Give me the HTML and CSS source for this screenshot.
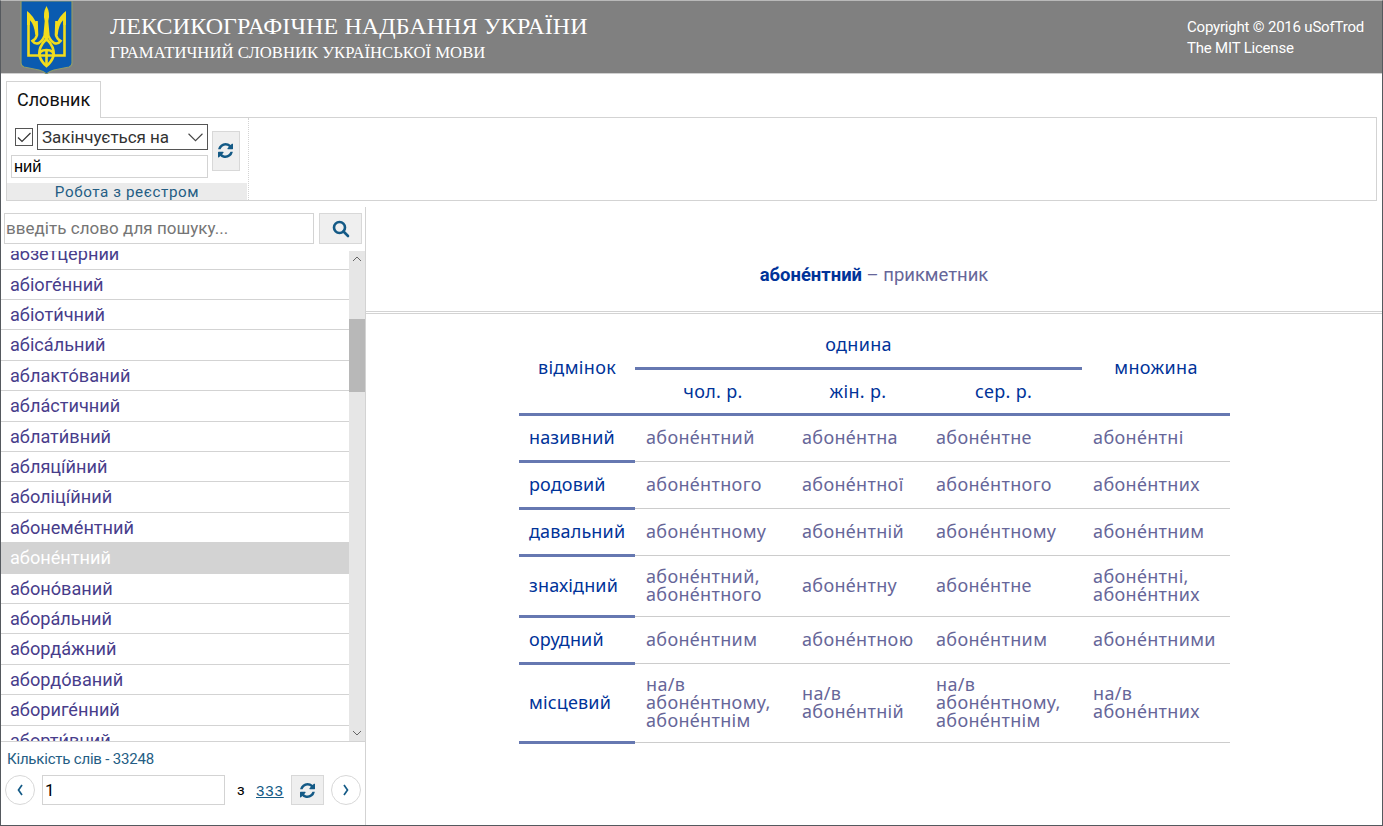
FILE: index.html
```html
<!DOCTYPE html>
<html lang="uk">
<head>
<meta charset="utf-8">
<title>Лексикографічне надбання України</title>
<link rel="stylesheet" href="styles.css">
</head>
<body>
<svg class="defs" width="0" height="0">
  <symbol id="refresh" viewBox="0 0 1536 1536">
    <path d="M1511 928q0 5-1 7-64 268-268 434.500T764 1536q-146 0-282.500-55T238 1324l-129 129q-19 19-45 19t-45-19-19-45V960q0-26 19-45t45-19h448q26 0 45 19t19 45-19 45l-137 137q71 66 161 102t187 36q134 0 250-65t186-179q11-17 53-117 8-23 30-23h192q13 0 22.500 9.500t9.500 22.500zM1536 128v448q0 26-19 45t-45 19h-448q-26 0-45-19t-19-45 19-45l138-138Q969 256 768 256q-134 0-250 65T332 500q-11 17-53 117-8 23-30 23H50q-13 0-22.500-9.500T18 608v-7q65-268 270-434.500T768 0q146 0 284 55.500T1297 212l130-129q19-19 45-19t45 19 19 45z"/>
  </symbol>
</svg>
<div class="app">
  <header class="header">
    <svg class="emblem" viewBox="0 0 54 73">
      <path d="M1 0H52V62Q52 65 49 66L34 69Q30 70 26.500 73Q23 70 19 69L4 66Q1 65 1 62Z" fill="#0a5bb0" stroke="#8f9b69" stroke-width="1.2"/>
      <g fill="none" stroke="#f2dc1c" stroke-width="2.6">
        <path d="M8.500 17V54.500H44.500V17"/>
        <path d="M16.500 20L17 34Q16 38 12.500 40Q15 43.500 19 42Q24 39 26 30"/>
        <path d="M36.500 20L36 34Q37 38 40.500 40Q38 43.500 34 42Q29 39 27 30"/>
        <path d="M26.500 38Q18 46 19.500 55Q21.500 61 26.500 65Q31.500 61 33.500 55Q35 46 26.500 38Z"/>
        <path d="M19 55Q19 49 26.500 49Q34 49 34 55M26.500 49V65"/>
      </g>
      <g fill="#f2dc1c">
        <path d="M7 10Q13 14 17.800 25V33L15.300 34Q14.500 24 9.800 19V24H7Z"/>
        <path d="M46 10Q40 14 35.200 25V33L37.700 34Q38.500 24 43.200 19V24H46Z"/>
        <path d="M26.500 5Q30.500 12 28.300 20L29.500 33L26.500 41L23.500 33L24.700 20Q22.500 12 26.500 5Z"/>
      </g>
    </svg>
    <div class="titles">
      <div class="title">ЛЕКСИКОГРАФІЧНЕ НАДБАННЯ УКРАЇНИ</div>
      <div class="subtitle">ГРАМАТИЧНИЙ СЛОВНИК УКРАЇНСЬКОЇ МОВИ</div>
    </div>
    <div class="copyright">Copyright © 2016 uSofTrod<br>The MIT License</div>
  </header>

  <section class="ribbon">
    <div class="tab">Словник</div>
    <div class="panel">
      <div class="group">
        <div class="controls">
          <div class="filters">
            <div class="condition">
              <span class="check"><svg viewBox="0 0 16 16"><path d="M2 8.500L6 12.500L14.500 4"/></svg></span>
              <div class="select"><span>Закінчується на</span><svg viewBox="0 0 14 8"><path d="M.5 .5L7 7L13.500 .5"/></svg></div>
            </div>
            <div class="pattern">ний</div>
          </div>
          <button class="apply"><svg class="icon"><use href="#refresh"/></svg></button>
        </div>
        <div class="caption">Робота з реєстром</div>
      </div>
    </div>
  </section>

  <main class="main">
    <aside class="side">
      <div class="search">
        <div class="search-field">введіть слово для пошуку...</div>
        <button class="search-button"><svg viewBox="0 0 18 18"><circle cx="7.500" cy="7.500" r="5.500"/><path d="M11.500 11.500L16 16"/></svg></button>
      </div>
      <div class="list">
        <ul class="words">
          <li>абзетце́рний</li><li>абіоге́нний</li><li>абіоти́чний</li><li>абіса́льний</li><li>аблакто́ваний</li><li>абла́стичний</li><li>аблати́вний</li><li>абляці́йний</li><li>аболіці́йний</li><li>абонеме́нтний</li><li class="selected">абоне́нтний</li><li>абоно́ваний</li><li>абора́льний</li><li>аборда́жний</li><li>абордо́ваний</li><li>абориге́нний</li><li>аборти́вний</li>
        </ul>
        <div class="scrollbar">
          <svg viewBox="0 0 10 6"><path d="M1 5L5 1L9 5"/></svg>
          <div class="thumb"></div>
          <svg viewBox="0 0 10 6"><path d="M1 1L5 5L9 1"/></svg>
        </div>
      </div>
      <div class="count">Кількість слів - 33248</div>
      <div class="pager">
        <button class="round"><svg viewBox="0 0 6 12"><path d="M5 1L1.500 6L5 11"/></svg></button>
        <div class="page">1</div>
        <span class="of">з</span>
        <a class="total">333</a>
        <button class="reload"><svg class="icon"><use href="#refresh"/></svg></button>
        <button class="round"><svg viewBox="0 0 6 12"><path d="M1 1L4.500 6L1 11"/></svg></button>
      </div>
    </aside>
    <article class="content">
      <div class="word"><b>абоне́нтний</b> – прикметник</div>
      <table class="forms">
        <colgroup><col class="c1"><col class="c2"><col class="c3"><col class="c4"><col class="c5"></colgroup>
        <thead>
          <tr class="h1"><th rowspan="2">відмінок</th><th colspan="3">однина</th><th rowspan="2">множина</th></tr>
          <tr class="h2"><th>чол. р.</th><th>жін. р.</th><th>сер. р.</th></tr>
        </thead>
        <tbody>
          <tr><th>називний</th><td>абоне́нтний</td><td>абоне́нтна</td><td>абоне́нтне</td><td>абоне́нтні</td></tr>
          <tr><th>родовий</th><td>абоне́нтного</td><td>абоне́нтної</td><td>абоне́нтного</td><td>абоне́нтних</td></tr>
          <tr><th>давальний</th><td>абоне́нтному</td><td>абоне́нтній</td><td>абоне́нтному</td><td>абоне́нтним</td></tr>
          <tr class="two"><th>знахідний</th><td>абоне́нтний,<br>абоне́нтного</td><td>абоне́нтну</td><td>абоне́нтне</td><td>абоне́нтні,<br>абоне́нтних</td></tr>
          <tr><th>орудний</th><td>абоне́нтним</td><td>абоне́нтною</td><td>абоне́нтним</td><td>абоне́нтними</td></tr>
          <tr class="three"><th>місцевий</th><td>на/в<br>абоне́нтному,<br>абоне́нтнім</td><td>на/в<br>абоне́нтній</td><td>на/в<br>абоне́нтному,<br>абоне́нтнім</td><td>на/в<br>абоне́нтних</td></tr>
        </tbody>
      </table>
    </article>
  </main>
</div>
</body>
</html>
```
FILE: styles.css
```css
* { box-sizing: border-box; }
body { margin: 0; font-family: Roboto, sans-serif; background: #fff; }
button { padding: 0; margin: 0; background: #efefef; border: 1px solid #d8d8d8; display: flex; align-items: center; justify-content: center; color: #145a86; }
.defs { display: block; height: 0; }
.app { width: 1383px; height: 826px; border: 1px solid #55595e; border-top-color: #b9b9b9; display: flex; flex-direction: column; overflow: hidden; }

.header { height: 73px; flex: none; background: #808080; border-bottom: 1px solid #d0d0d0; display: flex; color: #fff; }
.emblem { width: 54px; height: 73px; margin-left: 19px; }
.titles { flex: 1; padding: 10px 0 0 36px; font-family: "Liberation Serif", serif; white-space: nowrap; }
.title { font-size: 24px; line-height: 30px; letter-spacing: .09px; }
.subtitle { font-size: 16.700px; line-height: 24px; }
.copyright { width: 196px; padding: 16px 0 0 1px; font-size: 15px; line-height: 21px; letter-spacing: -.2px; }

.ribbon { flex: none; padding: 7px 5px 0; }
.tab { width: 95px; height: 37px; border: 1px solid #d3d3d3; border-bottom: 0; background: #fff; font-size: 18px; line-height: 36px; padding-left: 10px; margin-bottom: -1px; position: relative; color: #111; }
.panel { height: 84px; border: 1px solid #d3d3d3; }
.group { width: 242px; height: 82px; border-right: 1px dotted #d3d3d3; display: flex; flex-direction: column; justify-content: space-between; padding-right: 1px; }
.controls { display: flex; padding: 6px 0 0 4px; gap: 4px; }
.filters { width: 197px; display: flex; flex-direction: column; gap: 5px; }
.condition { display: flex; justify-content: space-between; align-items: center; padding-left: 4px; }
.check { width: 18px; height: 18px; border: 1px solid #555; }
.check svg { display: block; width: 16px; height: 16px; fill: none; stroke: #333; stroke-width: 1.2; }
.select { width: 171px; height: 26px; border: 1px solid #555; display: flex; align-items: center; justify-content: space-between; padding: 0 4px; font-size: 17px; color: #333; letter-spacing: -.05px; }
.select svg { width: 15px; height: 9px; fill: none; stroke: #444; }
.pattern { height: 23px; border: 1px solid #d3d3d3; padding-left: 2px; font: 16.500px/21px "Liberation Sans", sans-serif; color: #000; }
.apply { width: 28px; height: 40px; margin-top: 7px; padding: 0 1px 1px 0; }
.icon { width: 15px; height: 15px; fill: #145a86; }
.caption { height: 17px; background: #ebebeb; color: #245d84; font-size: 15.200px; line-height: 19px; letter-spacing: .6px; text-align: center; overflow: hidden; }

.main { flex: 1; display: flex; margin-top: 6px; min-height: 0; }
.side { width: 365px; border-right: 1px solid #d3d3d3; display: flex; flex-direction: column; }
.search { display: flex; gap: 5px; padding: 6px 0 0 3px; height: 44px; flex: none; }
.search-field { width: 310px; height: 31px; border: 1px solid #d3d3d3; font-size: 17px; line-height: 29px; padding-left: 1px; color: #757575; white-space: nowrap; letter-spacing: .04px; }
.search-button { width: 43px; height: 31px; }
.search-button svg { width: 18px; height: 18px; fill: none; stroke: #145a86; stroke-width: 2.600; stroke-linecap: round; }
.list { height: 491px; flex: none; display: flex; border-bottom: 1px solid #d3d3d3; overflow: hidden; }
.words { list-style: none; margin: -11.700px 0 0; padding: 0; flex: 1; }
.words li { height: 30.400px; border-bottom: 1px solid #d3d3d3; padding-left: 9px; font-size: 18.150px; line-height: 30px; color: #483d8b; }
.words .selected { background: #d3d3d3; color: #fff; }
.scrollbar { width: 16px; background: #e6e6e6; display: flex; flex-direction: column; align-items: center; padding: 5px 0; }
.scrollbar svg { width: 10px; height: 6px; fill: none; stroke: #666; }
.thumb { width: 16px; height: 73px; background: #b8b8b8; margin: 57px 0 auto; }
.count { height: 33px; padding-left: 6px; font-size: 15px; line-height: 34px; color: #245d84; letter-spacing: -.2px; }
.pager { display: flex; align-items: center; padding-left: 4px; height: 30px; }
.round { width: 30px; height: 30px; border-radius: 50%; background: #fff; }
.round svg { width: 6px; height: 12px; fill: none; stroke: #145a86; stroke-width: 1.700; }
.page { width: 183px; height: 30px; border: 1px solid #d3d3d3; margin-left: 7px; padding-left: 2px; font-size: 17px; line-height: 28px; color: #000; }
.of { margin-left: 12px; width: 19px; font-size: 15px; }
.total { width: 35px; font-size: 15px; letter-spacing: .9px; color: #145a86; text-decoration: underline; font-family: "Liberation Sans", sans-serif; }
.reload { width: 33px; height: 30px; margin-right: 7px; }

.content { flex: 1; }
.word { height: 107px; border-bottom: 3px double #d3d3d3; text-align: center; font-size: 18.450px; line-height: 136px; color: #669; overflow: hidden; }
.word b { color: #039; font-weight: 700; }
.forms { width: 711px; table-layout: fixed; border-collapse: collapse; margin: 7px 0 0 153px; font-family: "Noto Sans", sans-serif; font-size: 18px; line-height: 18px; letter-spacing: .34px; color: #669; }
.c1 { width: 116px; }
.c2 { width: 156px; }
.c3 { width: 134px; }
.c4 { width: 157px; }
.c5 { width: 148px; }
.forms th { font-weight: 400; color: #039; padding: 0; border-bottom: 3px solid #6678b1; white-space: nowrap; }
.forms td { padding: 0 0 2px 11px; border-bottom: 1px solid #ccc; white-space: nowrap; }
.forms tbody th { text-align: left; padding: 0 0 2px 10px; letter-spacing: .15px; }
.forms tr { height: 47px; }
.forms .h2 { height: 46px; }
.forms .two { height: 61px; }
.forms .three { height: 79px; }
```
